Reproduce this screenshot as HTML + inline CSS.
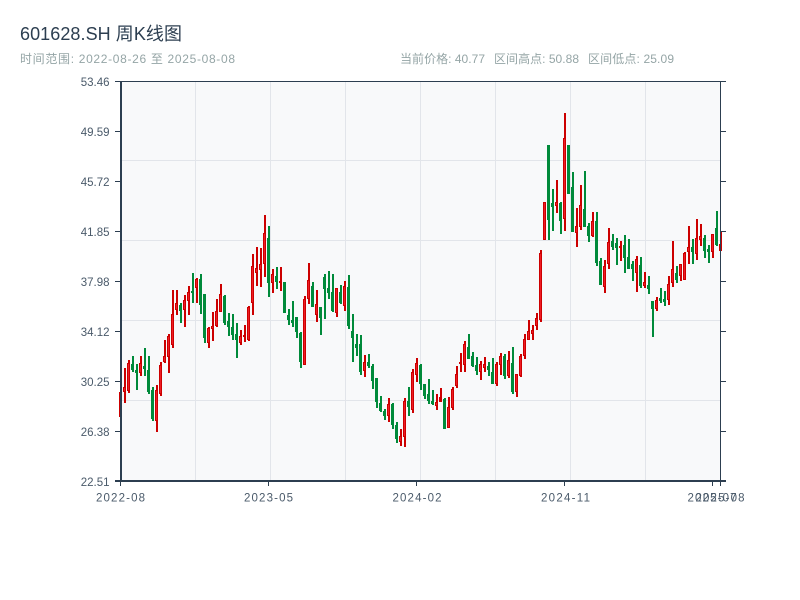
<!DOCTYPE html>
<html lang="zh">
<head>
<meta charset="utf-8">
<title>601628.SH 周K线图</title>
<style>
html,body{margin:0;padding:0;background:#fff}
body{width:800px;height:600px;overflow:hidden}
svg{display:block}
text{font-family:"Liberation Sans","Noto Sans CJK SC",sans-serif}
</style>
</head>
<body>
<svg width="800" height="600" viewBox="0 0 800 600" xmlns="http://www.w3.org/2000/svg">
<rect width="800" height="600" fill="#fff"/>
<text x="20" y="40" font-size="18" fill="#2c3e50" textLength="162">601628.SH 周K线图</text>
<text x="20" y="63" font-size="12" fill="#95a5a6" textLength="215">时间范围: 2022-08-26 至 2025-08-08</text>
<text x="400" y="63" font-size="12" fill="#95a5a6" textLength="85">当前价格: 40.77</text>
<text x="494" y="63" font-size="12" fill="#95a5a6" textLength="85">区间高点: 50.88</text>
<text x="588" y="63" font-size="12" fill="#95a5a6" textLength="86">区间低点: 25.09</text>

<rect x="120" y="81" width="600" height="400" fill="#f8f9fa"/>
<path d="M195.5 81V481M270.5 81V481M345.5 81V481M420.5 81V481M495.5 81V481M570.5 81V481M645.5 81V481M120 160.5H720M120 240.5H720M120 320.5H720M120 400.5H720" stroke="#e2e5ea" stroke-width="1" fill="none"/>

<g fill="none">
<g transform="translate(0.5,0)">
<path stroke="#cc0000" stroke-width="3" d="M120 392V417M124 387V392M128 363V391M140 363V373M156 390V421M160 365V394M164 356V362M168 336V357M172 314V345M176 303V310M184 300V310M188 292V301M196 279V288M208 328V343M212 326V329M216 311V326M220 294V312M240 336V343M244 335V337M248 307V340M252 266V303M256 268V273M260 264V270M264 233V264M272 274V283M280 281V283M304 299V365M308 280V299M316 304V315M336 288V313M344 286V306M364 362V371M388 404V416M400 436V442M404 401V437M412 372V410M416 363V375M436 402V406M440 397V402M448 407V428M452 389V408M456 374V386M460 362V364M464 344V365M480 364V372M484 364V368M496 364V384M500 356V365M508 360V376M516 374V392M520 356V376M524 339V356M528 331V340M532 330V334M536 318V326M540 253V320M544 202V240M556 202V206M564 138V219M576 226V233M580 205V227M592 221V236M604 266V287M608 242V264M620 246V248M636 259V273M644 282V286M656 300V309M668 284V300M672 269V283M680 264V276M684 253V280M688 247V252M696 238V254M700 236V240M712 234V252M720 244V251"/>
<path stroke="#008a3a" stroke-width="3" d="M132 364V370M136 370V373M144 366V369M148 370V392M152 390V419M180 305V311M192 291V293M200 279V305M204 294V338M224 296V323M228 321V327M232 327V335M236 334V340M268 238V283M276 276V282M284 282V313M288 315V320M292 320V323M296 317V332M300 333V362M312 286V307M320 307V318M324 277V289M328 288V293M332 292V311M340 292V303M348 287V326M352 331V338M356 344V348M360 344V372M368 362V366M372 366V381M376 378V402M380 403V411M384 411V416M392 404V425M396 425V439M408 401V407M420 365V384M424 384V396M428 394V401M432 401V404M444 399V429M468 347V359M472 356V366M476 365V371M488 366V370M492 372V384M504 356V376M512 363V392M548 145V220M552 203V207M560 203V221M568 145V194M572 187V232M584 209V227M588 226V236M596 221V263M600 261V285M612 241V247M616 243V248M624 245V258M628 257V269M632 264V269M640 265V286M648 285V289M652 301V309M660 298V301M664 299V302M676 273V280M692 247V252M704 238V251M708 249V252M716 228V245"/>
</g>
<g transform="translate(1,0)">
<path stroke="#cc0000" stroke-width="2" d="M120 390V419M124 368V403M128 360V393M140 356V376M156 385V432M160 362V396M164 340V363M168 334V373M172 290V348M176 290V315M184 295V327M188 286V315M196 278V303M208 327V348M212 312V341M216 299V327M220 284V312M240 330V345M244 325V342M248 306V341M252 254V315M256 247V286M260 248V287M264 215V277M272 269V293M280 267V291M304 296V365M308 263V304M316 290V322M336 288V317M344 281V311M364 355V377M388 398V422M400 429V446M404 398V447M412 369V413M416 358V382M436 394V410M440 388V402M448 397V428M452 387V410M456 366V388M460 353V372M464 341V372M480 361V380M484 357V372M496 362V386M500 353V375M508 351V378M516 374V397M520 354V377M524 334V359M528 320V340M532 325V340M536 313V330M540 250V322M544 202V240M556 180V213M564 113V231M576 208V247M580 185V230M592 212V237M604 260V293M608 228V269M620 241V261M636 256V292M644 272V288M656 297V311M668 276V305M672 241V287M680 264V281M684 252V280M688 226V264M696 219V260M700 224V246M712 234V258M720 232V251"/>
<path stroke="#008a3a" stroke-width="2" d="M132 356V372M136 364V390M144 348V376M148 356V394M152 387V421M180 303V323M192 273V303M200 274V314M204 294V343M224 295V325M228 313V336M232 314V340M236 323V358M268 226V297M276 267V289M284 282V313M288 309V325M292 301V327M296 317V338M300 332V368M312 282V307M320 307V335M324 274V319M328 271V299M332 274V312M340 285V304M348 275V329M352 314V362M356 334V356M360 335V375M368 354V368M372 364V389M376 378V408M380 396V412M384 409V420M392 403V429M396 422V443M408 387V416M420 364V390M424 384V399M428 379V404M432 390V405M444 398V429M468 334V359M472 352V367M476 357V375M488 362V376M492 358V384M504 354V379M512 347V394M548 145V240M552 189V231M560 202V234M568 145V194M572 172V232M584 171V227M588 223V242M596 212V266M600 258V285M612 234V250M616 238V265M624 235V273M628 239V269M632 261V281M640 257V288M648 276V294M652 301V337M660 288V303M664 291V306M676 266V283M692 239V264M704 235V258M708 245V263M716 211V246"/>
</g>
<g transform="translate(0.5,0)">
<path stroke="#ee1c25" stroke-width="1" d="M124 388V391M128 364V390M140 364V372M156 391V420M160 366V393M164 357V361M168 337V356M172 315V344M176 304V309M184 301V309M188 293V300M196 280V287M208 329V342M212 327V328M216 312V325M220 295V311M240 337V342M248 308V339M252 267V302M256 269V272M260 265V269M264 234V263M272 275V282M304 300V364M308 281V298M316 305V314M336 289V312M344 287V305M364 363V370M388 405V415M400 437V441M404 402V436M412 373V409M416 364V374M436 403V405M448 408V427M452 390V407M456 375V385M464 345V364M480 365V371M484 365V367M496 365V383M500 357V364M508 361V375M516 375V391M520 357V375M524 340V355M528 332V339M532 331V333M536 319V325M540 254V319M544 203V239M556 203V205M564 139V218M576 227V232M580 206V226M592 222V235M604 267V286M608 243V263M636 260V272M644 283V285M656 301V308M668 285V299M672 270V282M680 265V275M684 254V279M688 248V251M696 239V253M700 237V239M712 235V251"/>
</g>
</g>

<path d="M115 81.5H726M115 131.5H121M115 181.5H121M115 231.5H121M115 281.5H121M115 331.5H121M115 381.5H121M115 431.5H121M720 131.5H726M720 181.5H726M720 231.5H726M720 281.5H726M720 331.5H726M720 381.5H726M720 431.5H726M720.5 81V486M120.5 481V486M268.5 481V486M416.5 481V486M564.5 481V486M712.5 481V486" stroke="#2c3e50" stroke-width="1" fill="none"/>
<path d="M121 81V482M115 481H726" stroke="#2c3e50" stroke-width="2" fill="none"/>

<g font-size="11.5" fill="#4a5a6a" text-anchor="end">
<text x="109.5" y="86">53.46</text>
<text x="109.5" y="136">49.59</text>
<text x="109.5" y="186">45.72</text>
<text x="109.5" y="236">41.85</text>
<text x="109.5" y="286">37.98</text>
<text x="109.5" y="336">34.12</text>
<text x="109.5" y="386">30.25</text>
<text x="109.5" y="436">26.38</text>
<text x="109.5" y="486">22.51</text>
</g>
<g font-size="11.5" fill="#4a5a6a" text-anchor="middle">
<text x="120.5" y="501.5" textLength="49">2022-08</text>
<text x="268.5" y="501.5" textLength="49">2023-05</text>
<text x="417" y="501.5" textLength="49">2024-02</text>
<text x="565.5" y="501.5" textLength="49">2024-11</text>
<text x="712" y="501.5" textLength="49">2025-07</text>
<text x="720" y="501.5" textLength="49">2025-08</text>
</g>
</svg>
</body>
</html>
